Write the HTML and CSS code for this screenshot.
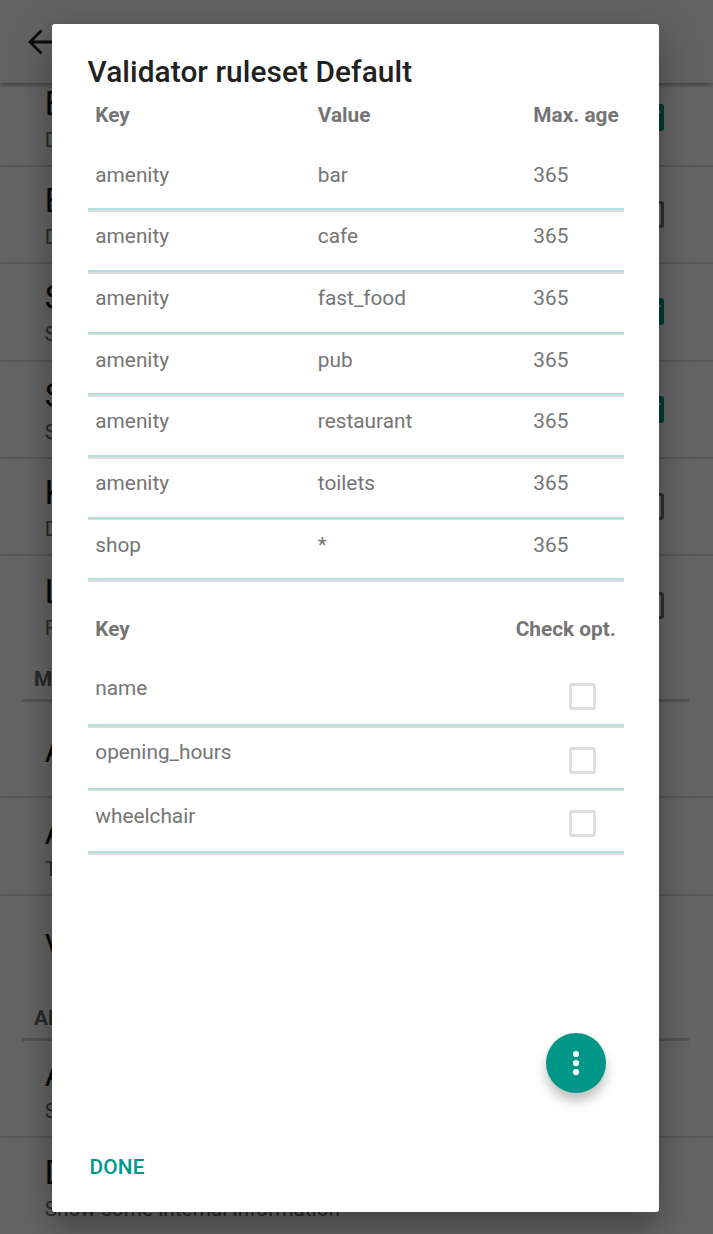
FILE: index.html
```html
<!DOCTYPE html>
<html lang="en">
<head>
<meta charset="utf-8">
<title>Validator ruleset</title>
<link rel="stylesheet" href="styles.css">
</head>
<body>
<div class="screen">
  <header class="toolbar">
    <svg class="back" viewBox="0 0 28 28" fill="none" stroke="#212121" stroke-width="2.8"><path d="M13.500 2.500 2 14l11.500 11.500M2 14H28"/></svg>
  </header>
  <main class="prefs">
    <div class="pref"><div><p class="pref-title">E</p><p class="pref-sub">D</p></div><svg class="box-on" viewBox="0 0 27 27"><rect width="27" height="27" rx="3" fill="#009688"/><path d="M4.500 14l6 6L23 7" fill="none" stroke="#fafafa" stroke-width="2.8"/></svg></div>
    <div class="pref"><div><p class="pref-title">E</p><p class="pref-sub">D</p></div><span class="box"></span></div>
    <div class="pref"><div><p class="pref-title">S</p><p class="pref-sub">S</p></div><svg class="box-on" viewBox="0 0 27 27"><rect width="27" height="27" rx="3" fill="#009688"/><path d="M4.500 14l6 6L23 7" fill="none" stroke="#fafafa" stroke-width="2.8"/></svg></div>
    <div class="pref"><div><p class="pref-title">S</p><p class="pref-sub">S</p></div><svg class="box-on" viewBox="0 0 27 27"><rect width="27" height="27" rx="3" fill="#009688"/><path d="M4.500 14l6 6L23 7" fill="none" stroke="#fafafa" stroke-width="2.8"/></svg></div>
    <div class="pref"><div><p class="pref-title">K</p><p class="pref-sub">D</p></div><span class="box"></span></div>
    <div class="pref last"><div><p class="pref-title">L</p><p class="pref-sub">F</p></div><span class="box"></span></div>
    <h2 class="category">M</h2>
    <div class="pref"><div><p class="pref-title">A</p></div></div>
    <div class="pref"><div><p class="pref-title">A</p><p class="pref-sub">T</p></div></div>
    <div class="pref last"><div><p class="pref-title">V</p></div></div>
    <h2 class="category">AD</h2>
    <div class="pref"><div><p class="pref-title">A</p><p class="pref-sub">S</p></div></div>
    <div class="pref last"><div><p class="pref-title">D</p><p class="pref-sub">Show some internal information</p></div></div>
  </main>
</div>
<div class="scrim">
  <section class="dialog">
    <h1 class="title">Validator ruleset Default</h1>
    <div class="head"><span>Key</span><span>Value</span><span>Max. age</span></div>
    <div class="row"><span>amenity</span><span>bar</span><span>365</span></div>
    <div class="row"><span>amenity</span><span>cafe</span><span>365</span></div>
    <div class="row"><span>amenity</span><span>fast_food</span><span>365</span></div>
    <div class="row"><span>amenity</span><span>pub</span><span>365</span></div>
    <div class="row"><span>amenity</span><span>restaurant</span><span>365</span></div>
    <div class="row"><span>amenity</span><span>toilets</span><span>365</span></div>
    <div class="row"><span>shop</span><span>*</span><span>365</span></div>
    <div class="head opt-head"><span>Key</span><span>Check opt.</span></div>
    <div class="row opt"><span>name</span><i class="check"></i></div>
    <div class="row opt"><span>opening_hours</span><i class="check"></i></div>
    <div class="row opt"><span>wheelchair</span><i class="check"></i></div>
    <div class="fab"><svg viewBox="0 0 60 60" fill="#fff"><circle cx="30" cy="21" r="3.1"/><circle cx="30" cy="30" r="3.1"/><circle cx="30" cy="39" r="3.1"/></svg></div>
    <div class="done">DONE</div>
  </section>
</div>
</body>
</html>
```
FILE: styles.css
```css
* { box-sizing: border-box; }
body { margin: 0; height: 1234px; overflow: hidden; position: relative; background: #fafafa; font-family: Roboto, sans-serif; font-size: 20.8px; line-height: 24.4px; }
h1, h2, p { margin: 0; }
.screen { height: 1234px; overflow: hidden; display: flex; flex-direction: column; isolation: isolate; }
.toolbar { height: 83px; flex: none; padding: 27.500px 27.500px; background: #f5f5f5; box-shadow: 0 1px 5px rgba(0, 0, 0, .5); z-index: 1; }
.back { width: 28px; height: 28px; display: block; }
.prefs { margin-top: -13.5px; }
.pref { height: 97.4px; border-bottom: 2px solid #d9d9d9; padding: 4px 49px 0 44.7px; display: flex; justify-content: space-between; align-items: center; }
.category + .pref { height: 96.6px; }
.pref.last { border-bottom: 0; }
.pref-title { font-size: 32.7px; line-height: 38px; color: #111; }
.pref-sub { margin-top: 4px; color: #666; line-height: 27px; }
.box, .box-on { width: 27px; height: 27px; margin-top: -4px; }
.box { border: 3px solid #737373; border-radius: 3px; }
.category { height: 48px; margin: 0 24px 0 22px; padding: 12px 12px 0; border-bottom: 3px solid #ccc; font-size: 20.8px; line-height: 26px; color: #666; }
.scrim { position: absolute; inset: 0; background: rgba(0, 0, 0, .6); padding: 23.5px 53.700px 22px 51.500px; }
.dialog { height: 1188.5px; padding: 30.500px 35.500px 0 36px; background: #fff; border-radius: 3px; color: #757575; display: flex; flex-direction: column; box-shadow: 0 14px 36px rgba(0, 0, 0, .36); }
.title { color: #212121; font-size: 29.8px; font-weight: 500; line-height: 35px; letter-spacing: .09px; white-space: nowrap; }
.head, .row { display: grid; grid-template-columns: 222.500px 215.500px 1fr; padding-left: 7.8px; white-space: nowrap; }
.head { height: 61.3px; padding-top: 14px; font-weight: 700; }
.row { height: 61.67px; flex: none; padding-top: 12.4px; background: linear-gradient(#b2dfdb, #b2dfdb) 0 calc(100% - 1.5px) / 100% 2px no-repeat, linear-gradient(#ddd, #ddd) 0 100% / 100% 2px no-repeat; }
.opt-head { height: 82px; padding-top: 35px; display: flex; justify-content: space-between; padding-right: 8px; }
.opt { display: flex; justify-content: space-between; height: 63.7px; padding-right: 28.3px; }
.check { width: 27px; height: 27px; margin-top: 6.7px; border: 3px solid #ddd; border-radius: 3px; }
.fab { width: 60px; height: 60px; margin: 178px 17.500px 0 auto; flex: none; border-radius: 50%; background: #009688; box-shadow: 0 8px 12px rgba(0, 0, 0, .25); }
.fab svg { display: block; }
.done { margin: 62.500px 0 0 2px; color: #009688; font-weight: 500; letter-spacing: .2px; }
```
